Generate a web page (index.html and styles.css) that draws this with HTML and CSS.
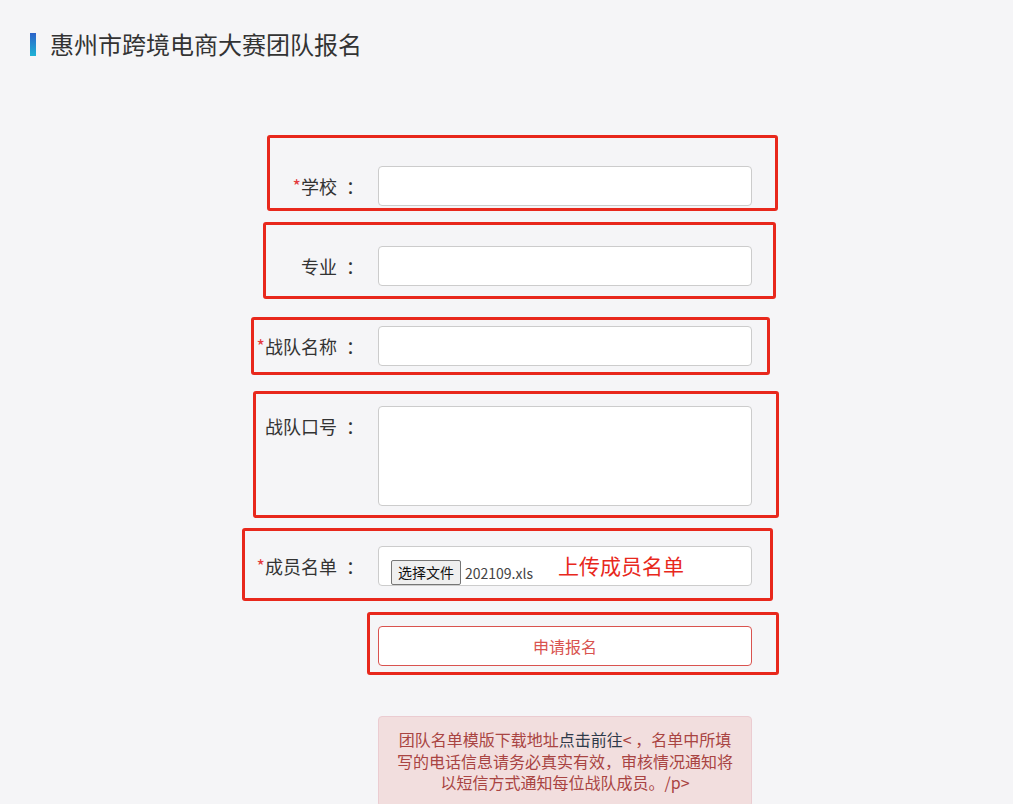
FILE: index.html
```html
<!DOCTYPE html>
<html lang="zh-CN">
<head>
<meta charset="utf-8">
<title>惠州市跨境电商大赛团队报名</title>
<link rel="stylesheet" href="styles.css">
</head>
<body>
<div class="page">
  <header class="page-head">
    <span class="head-bar"></span>
    <h1 class="head-title">惠州市跨境电商大赛团队报名</h1>
  </header>

  <form class="signup">
    <div class="row">
      <label class="row-label"><span class="req">*</span>学校<span class="colon">：</span></label>
      <div class="control"></div>
    </div>
    <div class="row">
      <label class="row-label">专业<span class="colon">：</span></label>
      <div class="control"></div>
    </div>
    <div class="row">
      <label class="row-label"><span class="req">*</span>战队名称<span class="colon">：</span></label>
      <div class="control"></div>
    </div>
    <div class="row">
      <label class="row-label">战队口号<span class="colon">：</span></label>
      <div class="control control-area"></div>
    </div>
    <div class="row">
      <label class="row-label"><span class="req">*</span>成员名单<span class="colon">：</span></label>
      <div class="control control-file">
        <span class="file-btn">选择文件</span>
        <span class="file-name">202109.xls</span>
      </div>
    </div>
    <div class="row">
      <span class="row-label"></span>
      <div class="submit">申请报名</div>
    </div>
    <div class="row">
      <span class="row-label"></span>
      <div class="notice">团队名单模版下载地址<span class="notice-link">点击前往</span>&lt; ，名单中所填写的电话信息请务必真实有效，审核情况通知将以短信方式通知每位战队成员。/p&gt;</div>
    </div>
  </form>

  <div class="marks">
    <div class="mark mark-1"></div>
    <div class="mark mark-2"></div>
    <div class="mark mark-3"></div>
    <div class="mark mark-4"></div>
    <div class="mark mark-5"></div>
    <div class="mark mark-6"></div>
    <div class="mark-note">上传成员名单</div>
  </div>
</div>
</body>
</html>
```

FILE: styles.css
```css
html, body {
  margin: 0;
  padding: 0;
  height: 804px;
  overflow: hidden;
}

body {
  background: #f5f5f7;
  font-family: "Noto Sans CJK SC", "Noto Sans", sans-serif;
  color: #333;
}

.page {
  position: relative;
  height: 804px;
}

.page-head {
  display: flex;
  align-items: center;
  gap: 14px;
  padding: 32px 0 0 30px;
  height: 24px;
}

.head-bar {
  width: 6px;
  height: 23px;
  background: linear-gradient(to bottom, #2b62c9, #1fb3d5);
}

.head-title {
  margin: 0;
  font-size: 24px;
  font-weight: 400;
  line-height: 24px;
  color: #333;
}

.signup {
  margin: 110px 0 0 240px;
  display: flex;
  flex-direction: column;
  gap: 40px;
}

.row {
  display: grid;
  grid-template-columns: 120px 374px;
  column-gap: 18px;
  align-items: start;
}

.row-label {
  height: 40px;
  font-size: 18px;
  line-height: 40px;
  text-align: right;
  color: #333;
  white-space: nowrap;
  padding-right: 0;
}

.colon {
  margin-left: 9px;
  margin-right: -4px;
}

.req {
  color: #e4393c;
  font-size: 18px;
  line-height: 0;
  vertical-align: 1px;
}

.control {
  box-sizing: border-box;
  height: 40px;
  background: #fff;
  border: 1px solid #ccc;
  border-radius: 4px;
}

.control-area {
  height: 100px;
}

.control-file {
  display: flex;
  align-items: flex-end;
  gap: 4px;
  padding: 0 12px 0 12px;
}

.file-btn {
  box-sizing: border-box;
  height: 25px;
  padding: 0 6px;
  font-size: 14px;
  line-height: 23px;
  color: #111;
  background: #efefef;
  border: 1px solid #767676;
  border-radius: 2px;
}

.file-name {
  font-size: 14px;
  line-height: 23px;
  color: #444;
}

.submit {
  box-sizing: border-box;
  height: 40px;
  background: #fff;
  border: 1px solid #d9534f;
  border-radius: 4px;
  color: #d9534f;
  font-size: 16px;
  line-height: 38px;
  text-align: center;
}

.notice {
  box-sizing: border-box;
  background: #f2dede;
  border: 1px solid #ebccd1;
  border-radius: 4px;
  color: #a94442;
  font-size: 16px;
  line-height: 21.5px;
  padding: 12px 15px;
  text-align: center;
  margin-top: 10px;
}

.notice-link {
  color: #2f3a4a;
}

.marks {
  position: absolute;
  inset: 0;
  pointer-events: none;
}

.mark {
  position: absolute;
  box-sizing: border-box;
  border: 3px solid #e8281c;
  border-radius: 3px;
}

.mark-1 { left: 267px; top: 135px; width: 511px; height: 76px; }
.mark-2 { left: 263px; top: 222px; width: 513px; height: 77px; }
.mark-3 { left: 251px; top: 317px; width: 519px; height: 58px; }
.mark-4 { left: 253px; top: 391px; width: 526px; height: 127px; }
.mark-5 { left: 242px; top: 528px; width: 531px; height: 73px; }
.mark-6 { left: 367px; top: 612px; width: 412px; height: 63px; }

.mark-note {
  position: absolute;
  left: 558px;
  top: 551px;
  font-size: 21px;
  line-height: 28px;
  color: #e8281c;
  white-space: nowrap;
}
```
